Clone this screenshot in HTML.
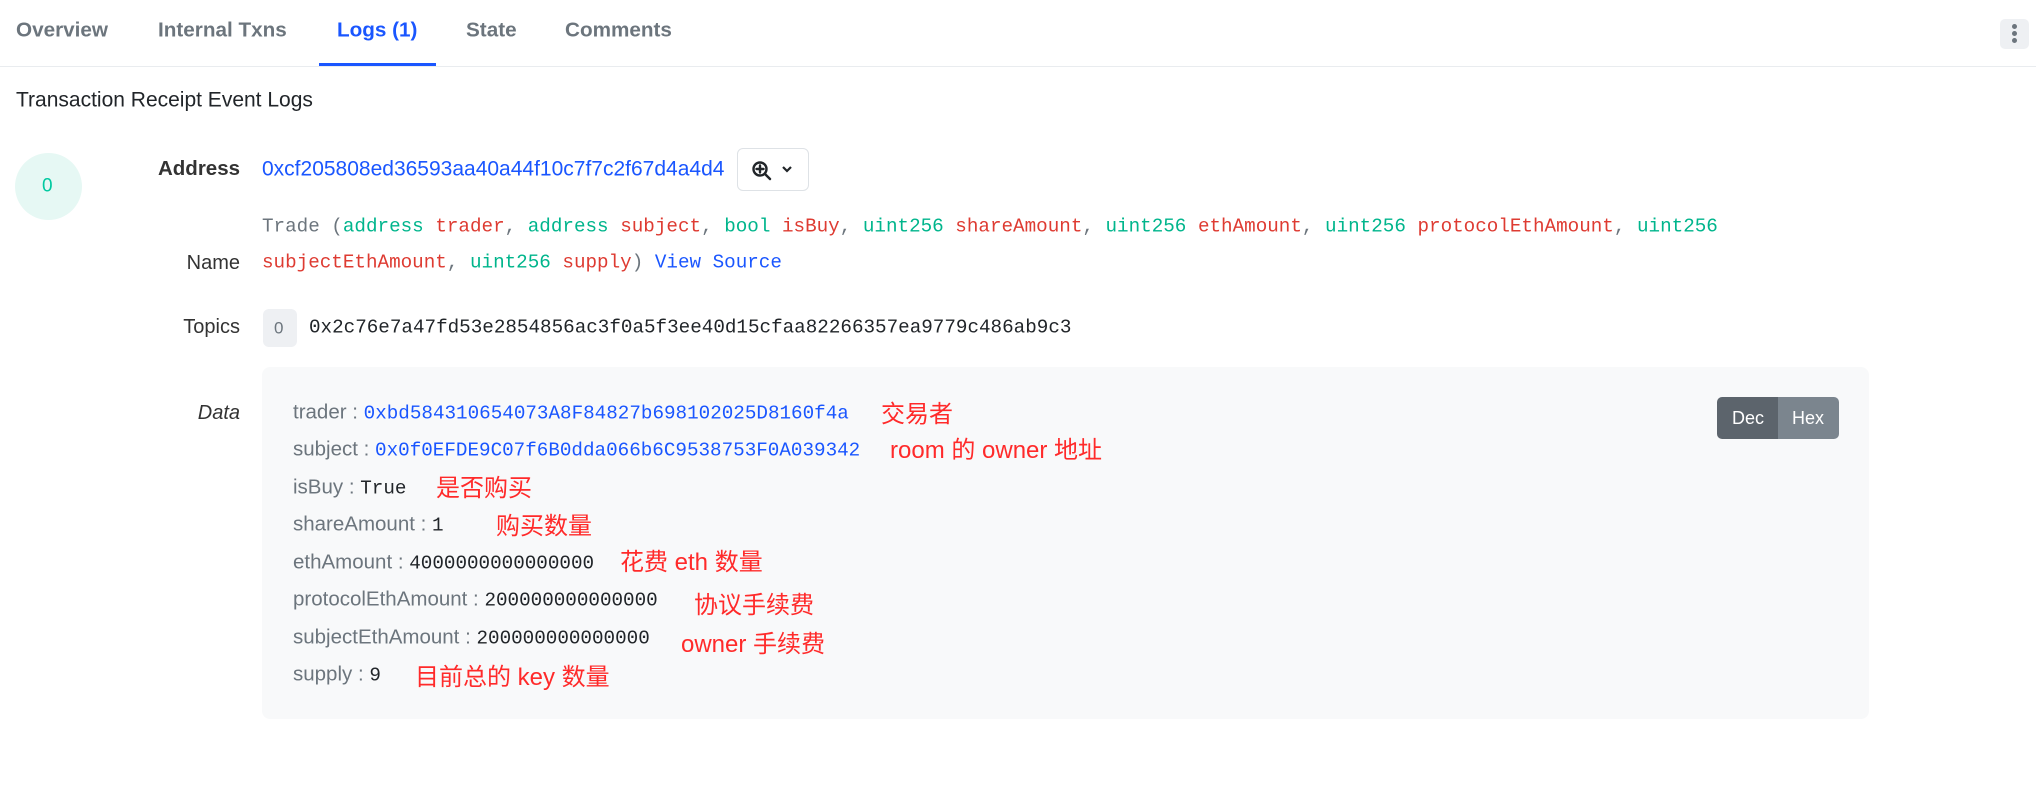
<!DOCTYPE html>
<html><head><meta charset="utf-8"><style>
*{margin:0;padding:0;box-sizing:border-box}
body{width:2036px;height:812px;background:#fff;font-family:"Liberation Sans","Noto Sans CJK SC",sans-serif;position:relative;overflow:hidden;color:#212529}
.a{position:absolute;white-space:nowrap;line-height:1;transform:translateY(-50%)}
.tab{font-size:20.7px;font-weight:bold;color:#6c757d}
.mono{font-family:"Liberation Mono","Noto Sans CJK SC",monospace;font-size:19.25px}
.g{color:#00b58c}.r{color:#de3b32}.b{color:#1a56ff}.gr{color:#6c757d}
.lbl{font-size:20.5px;color:#6c757d}
.cn{font-size:24px;color:#ff2a2a}
</style></head><body>
<div class="a tab" style="left:16px;top:31px">Overview</div>
<div class="a tab" style="left:158px;top:31px">Internal Txns</div>
<div class="a tab" style="left:337px;top:31px;color:#1a56ff">Logs (1)</div>
<div class="a tab" style="left:466px;top:31px">State</div>
<div class="a tab" style="left:565px;top:31px">Comments</div>
<div style="position:absolute;left:319px;top:63px;width:117px;height:4px;background:#1a56ff"></div>
<div style="position:absolute;left:0;top:66px;width:2036px;height:1px;background:#e9ecef"></div>
<div style="position:absolute;left:2000px;top:19px;width:29px;height:30px;background:#eef0f3;border-radius:5px"></div>
<div style="position:absolute;left:2012px;top:24px;width:5px;height:5px;border-radius:50%;background:#6c757d;box-shadow:0 7px 0 #6c757d,0 14px 0 #6c757d"></div>

<div class="a" style="left:16px;top:100px;font-size:21px;color:#212529">Transaction Receipt Event Logs</div>

<div style="position:absolute;left:15px;top:153px;width:67px;height:67px;border-radius:50%;background:#e6f8f4"></div>
<div class="a" style="left:42px;top:186px;font-size:19px;color:#00c9a0">0</div>

<div class="a" style="right:1796px;top:169px;font-size:20.5px;font-weight:bold;color:#333">Address</div>
<div class="a b" style="left:262px;top:169px;font-size:21px">0xcf205808ed36593aa40a44f10c7f7c2f67d4a4d4</div>
<div style="position:absolute;left:737px;top:148px;width:72px;height:43px;border:1px solid #dee2e6;border-radius:6px"></div>
<svg style="position:absolute;left:751px;top:160px" width="24" height="22" viewBox="0 0 24 22"><circle cx="9" cy="9" r="6.5" fill="none" stroke="#212529" stroke-width="2.4"/><path d="M9 5.5v7M5.5 9h7M14 14l5 5" stroke="#212529" stroke-width="2.4" stroke-linecap="round"/></svg>
<svg style="position:absolute;left:781px;top:164px" width="12" height="10" viewBox="0 0 12 10"><path d="M2 3l4 4 4-4" fill="none" stroke="#212529" stroke-width="2.2"/></svg>

<div class="a mono" style="left:262px;top:227px"><span class="gr">Trade (</span><span class="g">address</span> <span class="r">trader</span><span class="gr">,</span> <span class="g">address</span> <span class="r">subject</span><span class="gr">,</span> <span class="g">bool</span> <span class="r">isBuy</span><span class="gr">,</span> <span class="g">uint256</span> <span class="r">shareAmount</span><span class="gr">,</span> <span class="g">uint256</span> <span class="r">ethAmount</span><span class="gr">,</span> <span class="g">uint256</span> <span class="r">protocolEthAmount</span><span class="gr">,</span> <span class="g">uint256</span></div>
<div class="a" style="right:1796px;top:263px;font-size:20px;color:#333">Name</div>
<div class="a mono" style="left:262px;top:263px"><span class="r">subjectEthAmount</span><span class="gr">,</span> <span class="g">uint256</span> <span class="r">supply</span><span class="gr">)</span> <span class="b">View Source</span></div>

<div class="a" style="right:1796px;top:327px;font-size:20px;color:#333">Topics</div>
<div style="position:absolute;left:263px;top:309px;width:34px;height:38px;background:#eef0f3;border-radius:6px"></div>
<div class="a" style="left:274px;top:328px;font-size:17px;color:#6c757d">0</div>
<div class="a mono" style="left:309px;top:328px;color:#212529">0x2c76e7a47fd53e2854856ac3f0a5f3ee40d15cfaa82266357ea9779c486ab9c3</div>

<div class="a" style="right:1796px;top:413px;font-size:20px;font-style:italic;color:#333">Data</div>
<div style="position:absolute;left:262px;top:367px;width:1607px;height:352px;background:#f8f9fa;border-radius:8px"></div>
<div style="position:absolute;left:1717px;top:397px;width:61px;height:42px;background:#5c646c;border-radius:5px 0 0 5px"></div>
<div style="position:absolute;left:1778px;top:397px;width:61px;height:42px;background:#7b858e;border-radius:0 5px 5px 0"></div>
<div class="a" style="left:1732px;top:418px;font-size:18px;color:#fff">Dec</div>
<div class="a" style="left:1792px;top:418px;font-size:18px;color:#fff">Hex</div>

<div class="a lbl" style="left:293px;top:413px">trader : <span class="mono b">0xbd584310654073A8F84827b698102025D8160f4a</span></div>
<div class="a lbl" style="left:293px;top:450px">subject : <span class="mono b">0x0f0EFDE9C07f6B0dda066b6C9538753F0A039342</span></div>
<div class="a lbl" style="left:293px;top:488px">isBuy : <span class="mono" style="color:#212529">True</span></div>
<div class="a lbl" style="left:293px;top:525px">shareAmount : <span class="mono" style="color:#212529">1</span></div>
<div class="a lbl" style="left:293px;top:563px">ethAmount : <span class="mono" style="color:#212529">4000000000000000</span></div>
<div class="a lbl" style="left:293px;top:600px">protocolEthAmount : <span class="mono" style="color:#212529">200000000000000</span></div>
<div class="a lbl" style="left:293px;top:638px">subjectEthAmount : <span class="mono" style="color:#212529">200000000000000</span></div>
<div class="a lbl" style="left:293px;top:675px">supply : <span class="mono" style="color:#212529">9</span></div>

<div class="a cn" style="left:881px;top:415px">交易者</div>
<div class="a cn" style="left:890px;top:451px">room 的 owner 地址</div>
<div class="a cn" style="left:436px;top:489px">是否购买</div>
<div class="a cn" style="left:496px;top:527px">购买数量</div>
<div class="a cn" style="left:620px;top:563px">花费 eth 数量</div>
<div class="a cn" style="left:694px;top:606px">协议手续费</div>
<div class="a cn" style="left:681px;top:645px">owner 手续费</div>
<div class="a cn" style="left:415px;top:678px">目前总的 key 数量</div>
</body></html>
